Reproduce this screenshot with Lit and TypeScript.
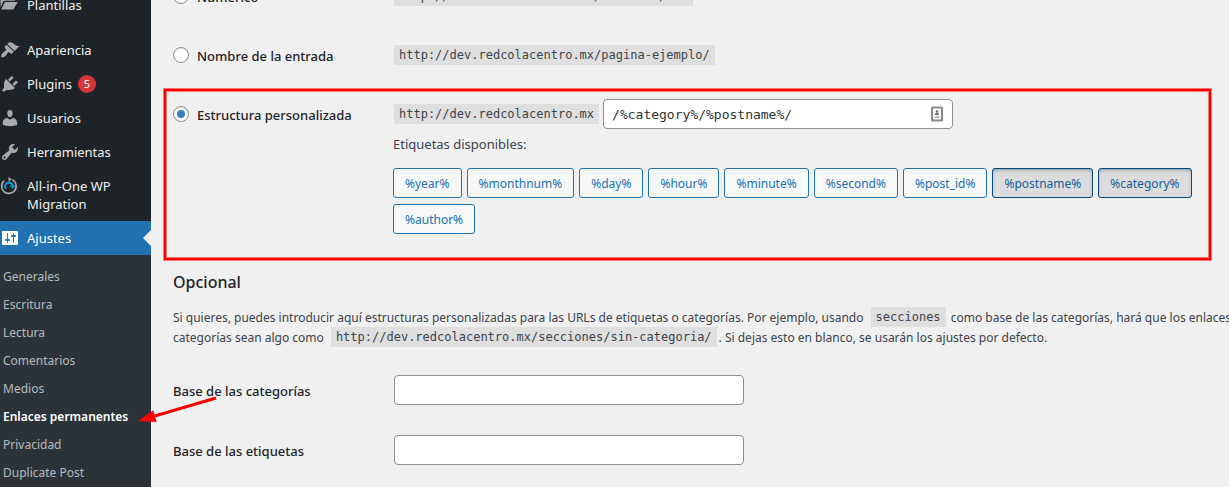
import { LitElement, html, css, svg } from 'lit';
import { customElement, property } from 'lit/decorators.js';
import { classMap } from 'lit/directives/class-map.js';

const ICONS = {
  folder: svg`<path d="M.5 12.500V2c0-.8.500-1.200 1.200-1.200H6l1.500 2h6.300c.7 0 1.200.5 1.200 1.200V5.800H4.700c-.8 0-1.300.4-1.600 1.100z"/><path d="M1.200 14.600 4.600 7.600c.2-.4.500-.6 1-.6H17.800l-4.300 7c-.3.4-.6.6-1.100.6z"/>`,
  brush: svg`<path d="M14.48 11.06 7.41 3.99l1.5-1.5c.5-.56 2.3-.47 3.51.32 1.21.8 1.43 1.28 2.91 2.1 1.18.64 2.45 1.26 4.45.85zm-.71.71L6.7 4.7 4.93 6.47c-.39.39-.39 1.02 0 1.41l1.06 1.06c.39.39.39 1.03 0 1.42-.6.6-1.43 1.11-2.21 1.69-.35.26-.7.53-1.01.84C1.43 14.23.4 16.08 1.4 17.07c.99 1 2.84-.03 4.18-1.36.31-.31.58-.66.85-1.02.57-.78 1.08-1.61 1.69-2.21.39-.39 1.02-.39 1.41 0l1.06 1.06c.39.39 1.02.39 1.41 0z"/>`,
  plug: svg`<path d="M13.11 4.36 9.87 7.6 8 5.73l3.24-3.24c.35-.34 1.05-.2 1.56.32.52.51.66 1.21.31 1.55zm-8 1.77.91-1.12 9.01 9.01-1.19.84c-.71.71-2.63 1.16-3.82 1.16H6.14L4.9 17.26c-.59.59-1.54.59-2.12 0-.59-.58-.59-1.53 0-2.12l1.24-1.24v-3.88c0-1.13.4-3.19 1.09-3.89zm7.26 3.97 3.24-3.24c.34-.35 1.04-.21 1.55.31.52.51.66 1.21.31 1.55l-3.24 3.25z"/>`,
  user: svg`<path d="M10 9.25c-2.27 0-2.73-3.44-2.73-3.44C7 4.02 7.82 2 9.97 2c2.16 0 2.98 2.02 2.71 3.81 0 0-.41 3.44-2.68 3.44zm0 2.57L12.72 10c2.39 0 4.52 2.33 4.52 4.53v2.49s-3.65 1.13-7.24 1.13c-3.65 0-7.24-1.13-7.24-1.13v-2.49c0-2.25 1.94-4.48 4.47-4.48z"/>`,
  wrench: svg`<path d="M16.68 9.77c-1.34 1.34-3.3 1.67-4.95.99l-5.41 6.52c-.99.99-2.59.99-3.58 0s-.99-2.59 0-3.57l6.52-5.42c-.68-1.65-.35-3.61.99-4.95 1.28-1.28 3.12-1.62 4.72-1.06l-2.89 2.89 2.82 2.82 2.86-2.87c.53 1.58.18 3.39-1.08 4.65zM3.81 16.21c.4.39 1.04.39 1.43 0 .4-.4.4-1.04 0-1.43-.39-.4-1.03-.4-1.43 0-.39.39-.39 1.03 0 1.43z"/>`,
  migration: svg`<path d="M8.500 1 12 3.200 8.500 5.500z"/><path d="M4.200 4.600A7.300 7.300 0 1 0 12.500 3.800" fill="none" stroke="currentColor" stroke-width="1.700"/><path d="M5.800 12.800A3.900 3.900 0 1 1 12.800 9.800" fill="none" stroke="#00a0e4" stroke-width="2"/><path d="M9.800 9.500h5.400L12.600 13z" fill="#00a0e4"/>`,
  sliders: svg`<path d="M18 16V4c0-.55-.45-1-1-1H3c-.55 0-1 .45-1 1v12c0 .55.45 1 1 1h14c.55 0 1-.45 1-1zM8 11h1c.55 0 1 .45 1 1s-.45 1-1 1H8v1.5c0 .28-.22.5-.5.5s-.5-.22-.5-.5V13H6c-.55 0-1-.45-1-1s.45-1 1-1h1V5.5c0-.28.22-.5.5-.5s.5.22.5.5V11zm5-2h-1c-.55 0-1-.45-1-1s.45-1 1-1h1V5.500c0-.28.22-.5.5-.5s.5.22.5.5V7h1c.55 0 1 .45 1 1s-.45 1-1 1h-1v5.500c0 .28-.22.5-.5.5s-.5-.22-.5-.5V9z"/>`,
};

interface MenuEntry {
  label: string;
  icon: keyof typeof ICONS;
  count?: number;
  current?: boolean;
  group?: boolean;
}

const MENU: MenuEntry[] = [
  { label: 'Plantillas', icon: 'folder' },
  { label: 'Apariencia', icon: 'brush', group: true },
  { label: 'Plugins', icon: 'plug', count: 5 },
  { label: 'Usuarios', icon: 'user' },
  { label: 'Herramientas', icon: 'wrench' },
  { label: 'All-in-One WP Migration', icon: 'migration' },
  { label: 'Ajustes', icon: 'sliders', current: true },
];

const SUBMENU = ['Generales', 'Escritura', 'Lectura', 'Comentarios', 'Medios', 'Enlaces permanentes', 'Privacidad', 'Duplicate Post'];
const CURRENT_PAGE = 'Enlaces permanentes';

const TAGS = ['year', 'monthnum', 'day', 'hour', 'minute', 'second', 'post_id', 'postname', 'category', 'author'];
const HOST = 'http://dev.redcolacentro.mx';

@customElement('admin-menu')
export class AdminMenu extends LitElement {
  static styles = css`
    :host { display: block; overflow: hidden; background: #1d2327; }
    * { box-sizing: border-box; }
    nav { display: flex; flex-direction: column; min-height: 100%; margin-top: -12px; }
    ul { list-style: none; margin: 0; padding: 0; }
    a { color: #f0f0f1; text-decoration: none; }
    .item { display: grid; grid-template-columns: 20px 1fr; column-gap: 7px; align-items: start; padding: 8px 24px 8px 0; font-size: 13px; line-height: 18px; position: relative; }
    .group { margin-top: 11px; }
    .item svg { width: 20px; height: 20px; margin: -1px 0; fill: currentColor; color: #a7aaad; }
    .current { background: #2271b1; color: #fff; }
    .current svg { color: #fff; }
    .current::after { content: ''; position: absolute; right: 0; top: 50%; margin-top: -8px; border: 8px solid transparent; border-right-color: #f0f0f0; border-left-width: 0; }
    .text { display: flex; align-items: center; gap: 6px; }
    .count { width: 18px; height: 18px; border-radius: 9px; background: #d63638; color: #fff; font-size: 11px; text-align: center; }
    .sub { flex: 1; background: #2c3338; padding: 8px 0; }
    .sub a { display: block; padding: 5px 3px; font-size: 12px; line-height: 18px; color: rgba(240, 246, 252, .7); white-space: nowrap; }
    .sub .here { color: #fff; font-weight: 600; }
  `;

  render() {
    return html`<nav aria-label="Menú principal">
      <ul>
        ${MENU.map((m) => html`<li>
          <a href="#" class=${classMap({ item: true, group: !!m.group, current: !!m.current })}>
            <svg viewBox="0 0 20 20" aria-hidden="true">${ICONS[m.icon]}</svg>
            <span class="text">${m.label}${m.count ? html`<span class="count">${m.count}</span>` : ''}</span>
          </a>
        </li>`)}
      </ul>
      <ul class="sub">
        ${SUBMENU.map((s) => html`<li><a href="#" class=${classMap({ here: s === CURRENT_PAGE })}>${s}</a></li>`)}
      </ul>
    </nav>`;
  }
}

@customElement('permalink-form')
export class PermalinkForm extends LitElement {
  @property() structure = '/%category%/%postname%/';

  static styles = css`
    :host { display: block; overflow: hidden; color: #3c434a; font-size: 12px; line-height: 20px; }
    * { box-sizing: border-box; }
    form { margin-top: -34px; padding-left: 22px; }
    .row { display: grid; grid-template-columns: 220px minmax(0, 1fr); align-items: center; min-height: 60px; }
    .row:first-child { min-height: 59px; }
    .custom { align-items: start; padding: 14px 30px 27px 0; position: relative; }
    .label { display: flex; align-items: center; gap: 8px; color: #1d2327; font-size: 13px; font-weight: 500; white-space: nowrap; }
    .label span { padding-top: 2px; }
    .custom .label { height: 30px; }
    input { font: inherit; color: #2c3338; margin: 0; background: #fff; border: 1px solid #8c8f94; }
    input[type='radio'] { appearance: none; flex: none; width: 16px; height: 16px; border-radius: 50%; display: grid; place-items: center; box-shadow: inset 0 1px 2px rgba(0, 0, 0, .1); }
    input[type='radio']:checked::before { content: ''; width: 8px; height: 8px; border-radius: 50%; background: #3582c4; }
    input[type='text'] { width: 350px; max-width: 100%; height: 30px; padding: 0 8px; border-radius: 4px; }
    .row > input[type='text'] { margin-left: 1px; }
    code { display: inline-block; height: 20px; padding: 0 5px; margin: 0 1px; background: rgba(0, 0, 0, .07); font-family: 'DejaVu Sans Mono', monospace; font-size: 12px; }
    .field { display: flex; align-items: center; gap: 3px; }
    .entry { display: flex; position: relative; }
    .entry input { font-family: 'DejaVu Sans Mono', monospace; font-size: 13px; }
    .entry svg { position: absolute; right: 10px; top: 7px; width: 12px; height: 16px; }
    .hint { margin: 5px 0 14px; font-size: 13px; }
    .tags { display: flex; flex-wrap: wrap; gap: 6px 5px; list-style: none; margin: 0; padding: 0; }
    button { display: block; height: 30px; padding: 1px 11px 0; border: 1px solid #2271b1; border-radius: 3px; background: #f6f7f7; color: #2271b1; font: inherit; }
    .active { border-color: #0a4b78; background: #dcdcde; color: #135e96; box-shadow: inset 0 2px 5px -3px #0a4b78; }
    .frame { position: absolute; inset: 4px 18px 1px -9px; border: 2px solid #f00; box-shadow: 0 0 0 1px rgba(255, 0, 0, .5), inset 0 0 0 1px rgba(255, 0, 0, .5); pointer-events: none; }
    h2 { margin: 10px 0 15px; font-size: 16px; line-height: 22px; font-weight: 500; color: #1d2327; }
    .intro { margin: 0 0 12px; white-space: nowrap; }
    .intro code { vertical-align: top; margin: -1px 2px 0 4px; }
  `;

  render() {
    return html`<form>
      <div class="row">
        <label class="label"><input type="radio" name="selection" /><span>Numérico</span></label>
        <div><code>${HOST}/archivos/123</code></div>
      </div>
      <div class="row">
        <label class="label"><input type="radio" name="selection" /><span>Nombre de la entrada</span></label>
        <div><code>${HOST}/pagina-ejemplo/</code></div>
      </div>
      <div class="row custom">
        <label class="label"><input type="radio" name="selection" checked /><span>Estructura personalizada</span></label>
        <div>
          <div class="field">
            <code>${HOST}</code>
            <span class="entry">
              <input type="text" aria-label="Estructura personalizada" .value=${this.structure} />
              <svg viewBox="0 0 12 16" aria-hidden="true">
                <rect x="1" y="1.500" width="10" height="13" rx=".5" fill="#fff" stroke="#8b8b8b" stroke-width="2" />
                <circle cx="6" cy="5.300" r="1.200" fill="#777" /><path d="M4 9V7.500L5 6.500h2l1 1V9z" fill="#777" /><path d="M3.500 10h5v2h-5z" fill="#bbb" />
              </svg>
            </span>
          </div>
          <p class="hint">Etiquetas disponibles:</p>
          <ul class="tags">
            ${TAGS.map((t) => html`<li><button type="button" class=${classMap({ active: this.structure.includes(`%${t}%`) })}>%${t}%</button></li>`)}
          </ul>
        </div>
        <div class="frame"></div>
      </div>
      <h2>Opcional</h2>
      <p class="intro">Si quieres, puedes introducir aquí estructuras personalizadas para las URLs de etiquetas o categorías. Por ejemplo, usando <code>secciones</code> como base de las categorías, hará que los enlaces<br />categorías sean algo como <code>${HOST}/secciones/sin-categoria/</code>. Si dejas esto en blanco, se usarán los ajustes por defecto.</p>
      <div class="row">
        <label class="label" for="category"><span>Base de las categorías</span></label>
        <input type="text" id="category" />
      </div>
      <div class="row">
        <label class="label" for="tag"><span>Base de las etiquetas</span></label>
        <input type="text" id="tag" />
      </div>
    </form>`;
  }
}

@customElement('app-root')
export class AppRoot extends LitElement {
  static styles = css`
    :host { display: grid; grid-template-columns: 151px minmax(0, 1fr); height: 100vh; overflow: hidden; position: relative; background: #f0f0f0; font-family: 'Noto Sans', 'Open Sans', sans-serif; }
    .arrow { position: absolute; left: 136px; top: 394px; width: 84px; height: 32px; pointer-events: none; }
  `;

  render() {
    return html`
      <admin-menu></admin-menu>
      <permalink-form></permalink-form>
      <svg class="arrow" viewBox="0 0 84 32" aria-hidden="true">
        <path d="M80 4 17 22.500" stroke="#f00" stroke-width="3" />
        <path d="M2 27 17.300 16.300 20.700 28z" fill="#f00" />
      </svg>`;
  }
}
